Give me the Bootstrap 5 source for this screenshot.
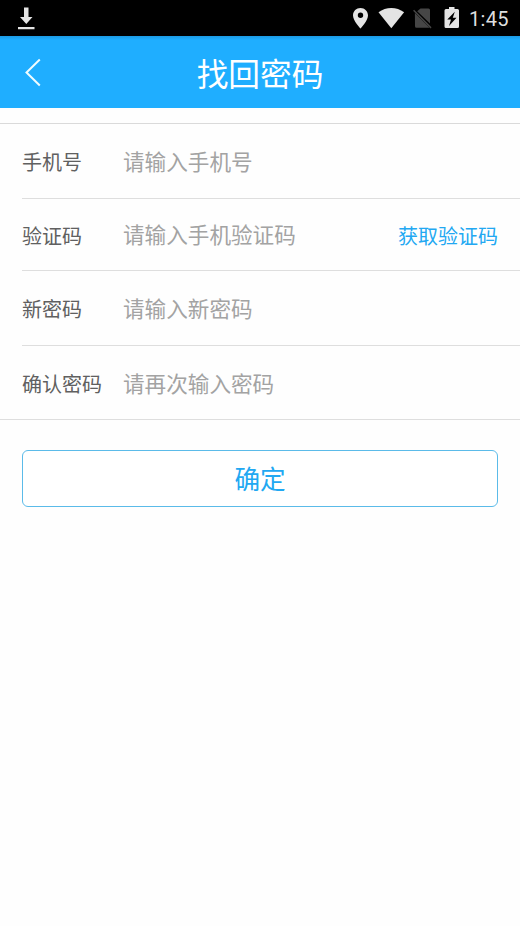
<!DOCTYPE html>
<html lang="zh-CN">
<head>
<meta charset="utf-8">
<meta name="viewport" content="width=device-width, initial-scale=1">
<title>找回密码</title>
<link href="https://cdn.jsdelivr.net/npm/bootstrap@5.3.0/dist/css/bootstrap.min.css" rel="stylesheet">
<style>
  body { font-family: "Noto Sans CJK SC", sans-serif; background: #fefefe; overflow: hidden; }
  .status-bar { height: 36px; background: #000; color: #dedede; padding: 0 12px 0 18px; }
  .status-bar svg { display: block; fill: #e4e4e4; }
  .clock { font: 400 20px/36px Roboto, sans-serif; letter-spacing: .3px; width: 39px; margin-left: 9px; padding-top: 2px; white-space: nowrap; }
  .title-bar { height: 72px; background: linear-gradient(#1b9ae4, #1faeff 4px); color: #fff; }
  .title-bar h1 { font-size: 31.7px; line-height: 72px; font-weight: 400; }
  .back-btn { width: 70px; height: 72px; }
  .form-rows { margin-top: 15px; border-top: 1px solid #dadada; border-bottom: 1px solid #dedede; height: 297px; }
  .form-line { margin-left: 22px; padding-right: 22px; height: 75px; border-bottom: 1px solid #dedede; }
  .form-line.short { height: 72px; }
  .form-line.short .form-control { margin-bottom: 2px; }
  .form-line:last-child { border-bottom: 0; height: 73px; }
  .form-line label { width: 101px; font-size: 20px; line-height: 30px; padding-top: 2px; color: #606060; }
  .form-line .form-control { font-size: 21.6px; line-height: 32px; height: 32px; min-width: 0; color: #606060; }
  .form-line .form-control::placeholder { color: #a3a3a3; opacity: 1; }
  .code-btn { font-size: 20px; line-height: 30px; padding: 2px 0 0; color: #22a8f2; white-space: nowrap; }
  .confirm-btn { margin: 30px 22px 0; height: 57px; font-size: 25.6px; line-height: 1; padding: 0 0 1px; color: #22a8f2; border: 1px solid #5bbbe9; border-radius: 6px; background: #fff; }
</style>
</head>
<body>
<div class="status-bar d-flex align-items-center">
  <svg width="17" height="36" viewBox="0 0 17 36"><path d="M6 7.500h4.500V17h4L8.300 24 2 17h4zM0 27h16.500v2.200H0z"/></svg>
  <svg class="ms-auto" width="108" height="36" viewBox="352 0 108 36">
    <path fill-rule="evenodd" d="M360.500 8c-4.200 0-7.500 3.200-7.500 7.400 0 5.300 7.500 13 7.500 13s7.500-7.700 7.500-13c0-4.200-3.300-7.400-7.500-7.400zm0 4.500a2.700 2.700 0 1 1 0 5.400 2.700 2.700 0 0 1 0-5.400z"/>
    <path d="M391.300 28.200L378.500 12.300c7.500-5.700 18.100-5.700 25.600 0z"/>
    <path fill="#464646" d="M420.500 8.500H428.500q1.500 0 1.500 1.500v13.500L417.200 11.300zM414.900 13L429.500 27.700H416.500q-1.500 0-1.500-1.500z"/>
    <path stroke="#464646" stroke-width="1.500" d="M413.600 10.300L431 27.900"/>
    <path fill-rule="evenodd" d="M449 7h5.500v2H457.500q1.500 0 1.500 1.500v16q0 1.500-1.500 1.500H446q-1.500 0-1.500-1.500v-16Q444.500 9 446 9h3zM454.800 11.800L447.300 19.500h3.700l-2 6.500 7.500-8.300h-3.700z"/>
  </svg>
  <div class="clock">1:45</div>
</div>

<header class="title-bar position-relative">
  <h1 class="m-0 text-center">找回密码</h1>
  <button class="back-btn btn p-0 border-0 position-absolute top-0 start-0" type="button" aria-label="返回">
    <svg class="d-block" width="70" height="72" viewBox="0 0 70 72" fill="none" stroke="#effcff" stroke-width="2"><path d="M39.800 23.500L26.500 36.500 39.800 49.500"/></svg>
  </button>
</header>

<form>
  <div class="form-rows">
    <div class="form-line d-flex align-items-center">
      <label for="phone">手机号</label>
      <input id="phone" type="text" class="form-control border-0 p-0 bg-transparent flex-fill w-auto" placeholder="请输入手机号">
    </div>
    <div class="form-line short d-flex align-items-center">
      <label for="code">验证码</label>
      <input id="code" type="text" class="form-control border-0 p-0 bg-transparent flex-fill w-auto" placeholder="请输入手机验证码">
      <button type="button" class="code-btn btn border-0">获取验证码</button>
    </div>
    <div class="form-line d-flex align-items-center">
      <label for="pass">新密码</label>
      <input id="pass" type="password" class="form-control border-0 p-0 bg-transparent flex-fill w-auto" placeholder="请输入新密码">
    </div>
    <div class="form-line d-flex align-items-center">
      <label for="again">确认密码</label>
      <input id="again" type="password" class="form-control border-0 p-0 bg-transparent flex-fill w-auto" placeholder="请再次输入密码">
    </div>
  </div>
  <div class="d-grid">
    <button type="button" class="confirm-btn btn">确定</button>
  </div>
</form>
<script src="https://cdn.jsdelivr.net/npm/bootstrap@5.3.0/dist/js/bootstrap.bundle.min.js"></script>
</body>
</html>
